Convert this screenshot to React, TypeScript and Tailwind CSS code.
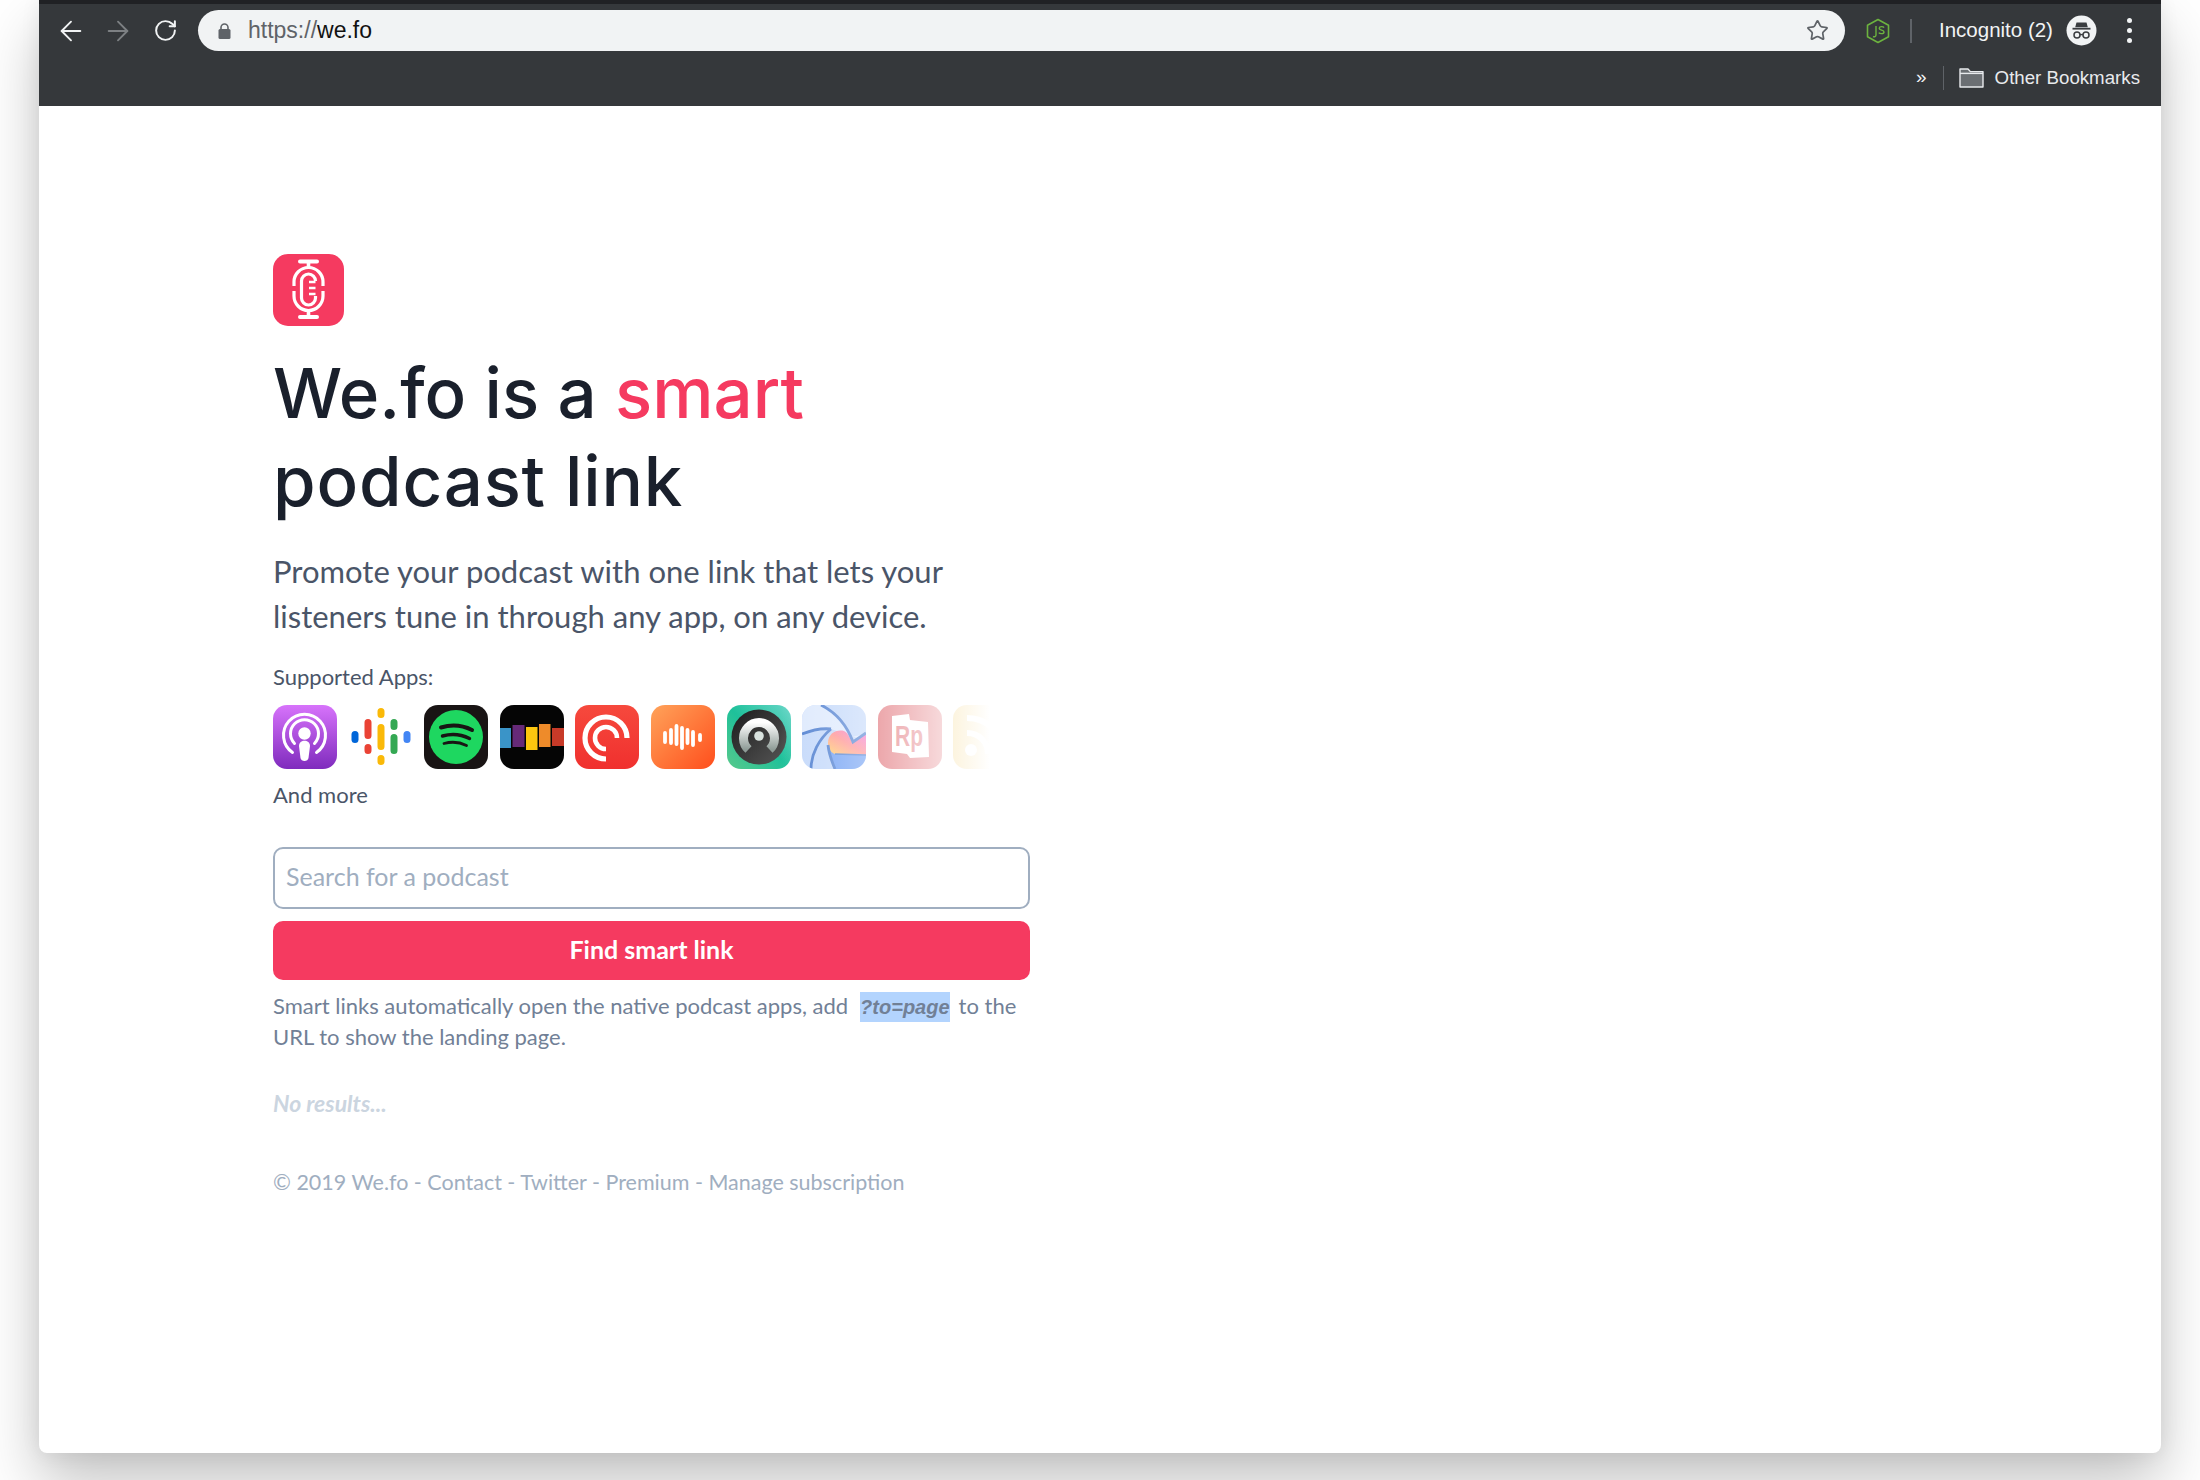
import { ArrowLeft, ArrowRight, RotateCw, Star } from 'lucide-react';

const bodyFont = "font-['Lato','Noto_Sans',sans-serif]";

function NodeIcon() {
  return (
    <svg width="24" height="26" viewBox="0 0 24 26" fill="none">
      <path d="M12 1.5 22.5 7.2v11.6L12 24.5 1.5 18.8V7.2z" stroke="#6cb33f" strokeWidth="1.6" strokeLinejoin="round" />
      <path d="M10 8v9c0 1.6-1.6 2.2-3 1.5" stroke="#6cb33f" strokeWidth="1.4" />
      <path d="M18 9.6c-.6-1.2-4.6-1.6-4.8.6-.2 2.4 4.8 1.4 4.8 3.8 0 2.2-4.4 2-5.200.6" stroke="#6cb33f" strokeWidth="1.4" />
    </svg>
  );
}

function LockIcon() {
  return (
    <svg width="13" height="16" viewBox="0 0 13 16">
      <rect x="0.500" y="6" width="12" height="10" rx="1.500" fill="#5f6368" />
      <path d="M3 7V4.500a3.500 3.500 0 0 1 7 0V7" fill="none" stroke="#5f6368" strokeWidth="1.600" />
    </svg>
  );
}

function IncognitoIcon() {
  return (
    <svg width="31" height="31" viewBox="0 0 31 31">
      <circle cx="15.5" cy="15.5" r="15" fill="#f1f3f4" />
      <path d="M10.5 7.5h10l1.3 4.8H9.2z" fill="#3a3d40" />
      <rect x="6.5" y="12.8" width="18" height="1.8" fill="#3a3d40" />
      <circle cx="11" cy="20" r="3" fill="none" stroke="#3a3d40" strokeWidth="1.5" />
      <circle cx="20" cy="20" r="3" fill="none" stroke="#3a3d40" strokeWidth="1.5" />
      <path d="M14 19.6h3" stroke="#3a3d40" strokeWidth="1.4" />
    </svg>
  );
}

function FolderIcon() {
  return (
    <svg width="25" height="20" viewBox="0 0 25 20">
      <path d="M1 1h8l2.4 2.6H24V19H1z" fill="#6b6f73" stroke="#e8eaed" strokeWidth="1.4" strokeLinejoin="round" />
      <path d="M1 5.4h23" stroke="#e8eaed" strokeWidth="1.4" />
    </svg>
  );
}

function Logo() {
  return (
    <svg width="71" height="72" viewBox="0 0 71 72" className="block">
      <rect width="71" height="72" rx="15" fill="#f53a60" />
      <g fill="none" stroke="#fff" strokeWidth="3.200">
        <path d="M27 7.500h17M27 63h17" strokeWidth="4" strokeLinecap="round" />
        <path d="M35.500 9v5M35.500 57v5" strokeWidth="3.600" />
        <path d="M21 32v-4a14.500 14.500 0 0 1 29 0v4" />
        <path d="M21 37v5a14.500 14.500 0 0 0 29 0v-5" />
        <path d="M42.500 27a7 7 0 0 0-14 0v17a7 7 0 0 0 14 0v-2" />
        <path d="M36 28h6.500M36 34h6.500M36 40h6.500" strokeWidth="2.600" />
      </g>
    </svg>
  );
}

function ApplePodcasts() {
  return (
    <svg viewBox="0 0 64 64" className="w-full h-full">
      <defs>
        <linearGradient id="ap" x1="0" y1="0" x2="0" y2="1">
          <stop offset="0" stopColor="#d773fb" />
          <stop offset="1" stopColor="#7f2bbd" />
        </linearGradient>
      </defs>
      <rect width="64" height="64" rx="14" fill="url(#ap)" />
      <g fill="none" stroke="#fff" strokeWidth="3" strokeLinecap="round">
        <path d="M19.500 47.500a21 21 0 1 1 24 0" />
        <path d="M21.500 38.500a14 14 0 1 1 20 0" />
      </g>
      <circle cx="31.500" cy="28.500" r="6.200" fill="#fff" />
      <path d="M26 41c0-7 11-7 11 0l-1.500 12c-.5 4-7.500 4-8 0z" fill="#fff" />
    </svg>
  );
}

function GooglePodcasts() {
  return (
    <svg viewBox="0 0 64 64" className="w-full h-full" strokeWidth="7" strokeLinecap="round" fill="none">
      <path d="M6 29.500v5" stroke="#0066d9" />
      <path d="M19 17.500v13M19 42.500v3" stroke="#ea4335" />
      <path d="M32 6.500v3M32 22.500v19M32 53.500v3" stroke="#fab908" />
      <path d="M45 17.500v4M45 32.500v13" stroke="#34a853" />
      <path d="M58 29.500v5" stroke="#4285f4" />
    </svg>
  );
}

function Spotify() {
  return (
    <svg viewBox="0 0 64 64" className="w-full h-full">
      <rect width="64" height="64" rx="14" fill="#191414" />
      <circle cx="32" cy="32" r="27" fill="#1ed760" />
      <g fill="none" stroke="#191414" strokeLinecap="round">
        <path d="M17 22.500c10-3 21-2.500 31 2.500" strokeWidth="4" />
        <path d="M18.500 31c9-2.500 18-2 27 2.500" strokeWidth="3.400" />
        <path d="M20 38.500c7.500-2 15.500-1.500 22.500 2" strokeWidth="2.800" />
      </g>
    </svg>
  );
}

function Stitcher() {
  return (
    <svg viewBox="0 0 64 64" className="w-full h-full">
      <rect width="64" height="64" rx="14" fill="#050505" />
      <rect x="0" y="23" width="11" height="20" fill="#3a94c8" />
      <rect x="12.500" y="20" width="12" height="22" fill="#662a78" />
      <rect x="26" y="22" width="11.500" height="23" fill="#fdc70f" />
      <rect x="39" y="19" width="11.500" height="23" fill="#ee8b2a" />
      <rect x="52" y="23" width="12" height="18" fill="#c73a28" />
    </svg>
  );
}

function PocketCasts() {
  return (
    <svg viewBox="0 0 64 64" className="w-full h-full">
      <defs>
        <linearGradient id="pc" x1="0" y1="0" x2="0" y2="1">
          <stop offset="0" stopColor="#f6493d" />
          <stop offset="1" stopColor="#f0302e" />
        </linearGradient>
      </defs>
      <rect width="64" height="64" rx="14" fill="url(#pc)" />
      <g fill="none" stroke="#fff">
        <path d="M31 54A21 21 0 1 1 52 33" strokeWidth="5.200" />
        <path d="M31 44A11 11 0 1 1 42 33" strokeWidth="4.600" />
      </g>
    </svg>
  );
}

function Castbox() {
  return (
    <svg viewBox="0 0 64 64" className="w-full h-full">
      <defs>
        <linearGradient id="cb" x1="0" y1="0" x2="1" y2="1">
          <stop offset="0" stopColor="#ffa35a" />
          <stop offset="1" stopColor="#ff4e1c" />
        </linearGradient>
      </defs>
      <rect width="64" height="64" rx="14" fill="url(#cb)" />
      <path d="M14 28v9M20 25v13M25.500 21v18M31 23v20M36.500 25v13M42 27v13M49 30v5" stroke="#fff" strokeWidth="3.800" strokeLinecap="round" />
    </svg>
  );
}

function Overcast() {
  return (
    <svg viewBox="0 0 64 64" className="w-full h-full">
      <defs>
        <linearGradient id="oc" x1="1" y1="0" x2="0" y2="1">
          <stop offset="0" stopColor="#68d6c8" />
          <stop offset="0.500" stopColor="#1ec19a" />
          <stop offset="1" stopColor="#58c98b" />
        </linearGradient>
        <linearGradient id="od" x1="0" y1="0" x2="1" y2="1">
          <stop offset="0" stopColor="#1c1c1c" />
          <stop offset="1" stopColor="#565656" />
        </linearGradient>
        <linearGradient id="ol" x1="0" y1="0" x2="0" y2="1">
          <stop offset="0" stopColor="#ffffff" />
          <stop offset="1" stopColor="#8f9c97" />
        </linearGradient>
      </defs>
      <rect width="64" height="64" rx="14" fill="url(#oc)" />
      <circle cx="32" cy="32" r="27.500" fill="url(#od)" />
      <path d="M21.500 44.500a15.500 15.500 0 1 1 21 0" fill="none" stroke="url(#ol)" strokeWidth="9" />
      <circle cx="32" cy="31" r="4.800" fill="#d9e3df" />
    </svg>
  );
}

function Iris() {
  return (
    <svg viewBox="0 0 64 64" className="w-full h-full">
      <defs>
        <linearGradient id="ih" x1="0" y1="1" x2="1" y2="0">
          <stop offset="0" stopColor="#ffd56a" />
          <stop offset="0.500" stopColor="#ff8f8f" />
          <stop offset="1" stopColor="#f06ae0" />
        </linearGradient>
        <clipPath id="ic">
          <rect width="64" height="64" rx="14" />
        </clipPath>
      </defs>
      <g clipPath="url(#ic)">
        <rect width="64" height="64" fill="#c3d8fa" />
        <path d="M0 0h19c14 7 25 18 30 32l15-3V36L29 24 0 29z" fill="#dde9fd" />
        <path d="M26 40 33 64h31V48z" fill="#6f9ff3" />
        <path d="M26 38c0-10 9-14 16-12 5 2 6 9 9 12l13-9v21l-31-1c-5-2-7-6-7-11z" fill="url(#ih)" />
        <g fill="none" stroke="#4f7fd0" strokeWidth="2.800">
          <path d="M19 0c14 7 25 18 32 37l13-9" />
          <path d="M0 29c10-4 20-6 29-5" />
          <path d="M9 64c0-15 8-30 20-40" />
          <path d="M26 40c1 9 4 17 7 24" />
          <path d="M33 49l31 1" strokeWidth="1.400" />
        </g>
      </g>
    </svg>
  );
}

function RadioPublic() {
  return (
    <svg viewBox="0 0 64 64" className="w-full h-full">
      <rect width="64" height="64" rx="14" fill="#dc5a62" />
      <path d="M14 11 31 9l1 6 18 2 1 35-19 1-3-4-15-2z" fill="#fff" />
      <text x="17" y="41" fontFamily="Liberation Sans, sans-serif" fontWeight="700" fontSize="30" fill="#dc5a62" textLength="28" lengthAdjust="spacingAndGlyphs">Rp</text>
    </svg>
  );
}

function RssIcon() {
  return (
    <svg viewBox="0 0 64 64" className="w-full h-full">
      <rect width="64" height="64" rx="14" fill="#f0c149" />
      <path d="M14 13c20 0 36 15 36 36M14 28c12 0 21 9 21 21" fill="none" stroke="#fff" strokeWidth="6" />
      <circle cx="18" cy="45" r="6" fill="#fff" />
    </svg>
  );
}

const apps = [ApplePodcasts, GooglePodcasts, Spotify, Stitcher, PocketCasts, Castbox, Overcast, Iris, RadioPublic, RssIcon];

export default function App() {
  return (
    <div className="w-[2200px] h-[1480px] bg-white overflow-hidden">
      <div className={`ml-[39px] w-[2122px] h-[1453px] bg-white rounded-b-[8px] flex flex-col shadow-[0_30px_60px_rgba(0,0,0,0.24),0_0_20px_rgba(0,0,0,0.07)] ${bodyFont}`}>
        {/* Browser chrome */}
        <div className="h-[106px] bg-[#35383b] shrink-0 flex flex-col font-['Liberation_Sans',sans-serif]">
          <div className="h-[4px] bg-[#202124] shrink-0" />
          <div className="h-[41px] mt-[6px] flex items-center">
            <ArrowLeft className="ml-[16px] w-[32px] h-[32px] text-[#f1f3f4]" strokeWidth={1.4} />
            <ArrowRight className="ml-[15px] w-[32px] h-[32px] text-[#7d8083]" strokeWidth={1.4} />
            <RotateCw className="ml-[19px] w-[25px] h-[25px] text-[#f1f3f4]" strokeWidth={1.9} />
            <div className="ml-[20px] w-[1647px] h-[41px] bg-[#f1f3f4] rounded-full flex items-center pl-[20px] pr-[16px]">
              <LockIcon />
              <span className="ml-[17px] text-[23px] text-[#5f6368]">
                https://<span className="text-[#111]">we.fo</span>
              </span>
              <Star className="ml-auto w-[23px] h-[23px] text-[#5f6368]" strokeWidth={1.8} />
            </div>
            <div className="ml-[21px]">
              <NodeIcon />
            </div>
            <div className="ml-[20px] w-[2px] h-[24px] bg-[#5f6368]" />
            <span className="ml-[27px] text-[20.500px] text-[#f1f3f4]">Incognito (2)</span>
            <div className="ml-[13px]">
              <IncognitoIcon />
            </div>
            <div className="ml-[30px] flex flex-col gap-[5px]">
              <span className="w-[5px] h-[5px] rounded-full bg-[#f1f3f4]" />
              <span className="w-[5px] h-[5px] rounded-full bg-[#f1f3f4]" />
              <span className="w-[5px] h-[5px] rounded-full bg-[#f1f3f4]" />
            </div>
          </div>
          <div className="h-[26px] mt-[14px] flex items-center justify-end pr-[21px]">
            <span className="text-[19px] leading-none text-[#f1f3f4] -mt-[4px]">»</span>
            <div className="ml-[16px] w-[1px] h-[24px] bg-[#5f6368]" />
            <div className="ml-[15px]">
              <FolderIcon />
            </div>
            <span className="ml-[11px] text-[18.700px] text-[#e8eaed]">Other Bookmarks</span>
          </div>
        </div>

        {/* Page */}
        <div className="pl-[234px] pt-[148px]">
          <Logo />
          <h1 className="mt-[23px] text-[69px] leading-[88px] font-medium text-[#1a202c] font-['Inter',sans-serif]">
            We.fo is a <span className="text-[#f53a60]">smart</span>
            <br />
            <span className="tracking-[0.8px]">podcast link</span>
          </h1>
          <p className="mt-[24px] text-[31px] leading-[45px] text-[#4a5568]">
            Promote your podcast with one link that lets your
            <br />
            listeners tune in through any app, on any device.
          </p>
          <p className="mt-[22px] text-[22px] leading-[32px] text-[#4a5568]">Supported Apps:</p>
          <div className="relative mt-[12px] w-[717px] h-[64px] overflow-hidden flex gap-[11.6px]">
            {apps.map((AppIcon, i) => (
              <div key={i} className="w-[64px] h-[64px] shrink-0">
                <AppIcon />
              </div>
            ))}
            <div className="absolute right-0 top-0 w-[210px] h-[64px] bg-gradient-to-r from-transparent to-white" />
          </div>
          <p className="mt-[10px] text-[22px] leading-[32px] text-[#4a5568]">And more</p>

          <div className="mt-[36px] w-[757px] h-[62px] border-2 border-[#a0aec0] rounded-[10px] flex items-center pl-[11px] pb-[2px] text-[25px] text-[#a0aec0]">
            Search for a podcast
          </div>
          <div className="mt-[12px] w-[757px] h-[59px] bg-[#f53a60] rounded-[10px] flex items-center justify-center pb-[2px] text-white text-[25px] font-bold">
            Find smart link
          </div>
          <p className="mt-[11px] w-[757px] text-[22px] leading-[30px] text-[#718096]">
            Smart links automatically open the native podcast apps, add
            <em className="ml-[12px] mr-[9px] px-0 inline-block leading-[30px] font-bold bg-[#b3d4fe] text-[20px] font-['Liberation_Sans',sans-serif]">?to=page</em>
            to the
            <br />
            URL to show the landing page.
          </p>
          <p className="mt-[35px] text-[23px] leading-[32px] italic font-bold text-[#cbd5e0]">No results...</p>
          <p className="mt-[47px] text-[21.500px] leading-[32px] text-[#a0aec0]">
            © 2019 We.fo - Contact - Twitter - Premium - Manage subscription
          </p>
        </div>
      </div>
    </div>
  );
}
